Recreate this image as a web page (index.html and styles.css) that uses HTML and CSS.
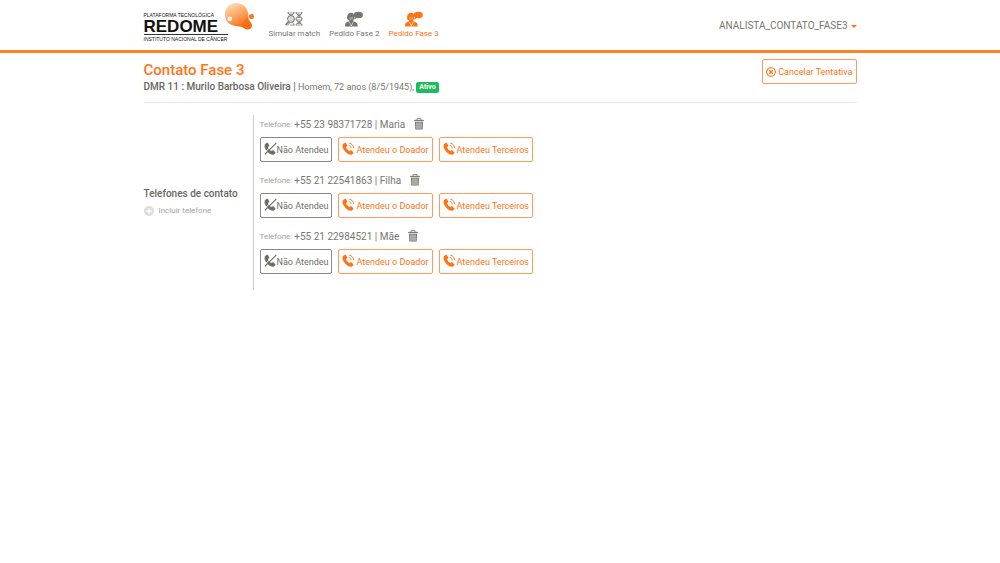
FILE: index.html
```html
<!DOCTYPE html>
<html lang="pt-BR">
<head>
<meta charset="utf-8">
<title>Redome - Contato Fase 3</title>
<meta name="viewport" content="width=device-width, initial-scale=1">
<link rel="stylesheet" href="styles.css">
</head>
<body>
<svg class="symbols" aria-hidden="true">
  <defs>
    <linearGradient id="drop" x1="0" y1="0" x2=".5" y2="1">
      <stop offset="0" stop-color="#ffe9d2"/><stop offset=".45" stop-color="#ffae70"/><stop offset="1" stop-color="#f96f12"/>
    </linearGradient>
  </defs>
  <symbol id="agent" viewBox="0 0 18 16">
    <ellipse cx="13.3" cy="4" rx="4.600" ry="3.300" fill="currentColor"/>
    <path d="M10 5.500 9.200 8.600l3-1.800z" fill="currentColor"/>
    <path d="M2.200 8.300C1.500 4 3.600 1.700 6 1.700c1.700 0 2.800.9 3 2.300l.2 3.500-1 2H4.300z" fill="currentColor"/>
    <path d="M4.200 6.200c1.500.2 2.700-.2 3.800-.8.300 2.300-.5 4-1.800 4S4.100 8.200 4.200 6.200z" fill="#fff" opacity=".25"/>
    <path d="M0 15.500c0-3.200.8-4.300 3.800-5l.8-1.500h3.400l.8 1.500c3 .7 3.900 1.800 3.900 5z" fill="currentColor"/>
    <path d="m4.200 10.600 2.100 4.400 2.100-4.400" fill="none" stroke="#fff" stroke-width=".6"/>
  </symbol>
  <symbol id="phone" viewBox="0 0 14 14">
    <path d="M1.200 2.200 3 .9c.5-.3 1-.2 1.300.3l1.300 2.300c.3.500.1 1-.3 1.300l-1 .7c.4 1.700 1.900 3.500 3.700 4.300l1-.7c.5-.3 1-.3 1.300.1l1.800 1.900c.4.500.3 1-.1 1.300l-1.500 1.200C5.500 14.700-1.500 6 1.200 2.200z" fill="currentColor"/>
  </symbol>
  <symbol id="call" viewBox="0 0 14 14">
    <use href="#phone" width="14" height="14"/>
    <path d="M7.300 3.700c1.500.3 2.500 1.500 2.500 3M7.800 1.200c2.700.4 4.500 2.600 4.500 5.200" fill="none" stroke="currentColor" stroke-width="1"/>
  </symbol>
  <symbol id="missed" viewBox="0 0 14 14">
    <use href="#phone" width="14" height="14"/>
    <path d="M0 12.100 12.400.2" stroke="#fff" stroke-width="1"/>
    <path d="M.8 13.300 13.200 1.200" stroke="currentColor" stroke-width="1.300"/>
  </symbol>
  <symbol id="trash" viewBox="0 0 10 12">
    <path d="M3 2V.6h4V2" fill="none" stroke="currentColor" stroke-width=".9"/>
    <path d="M.2 2.500h9.600" stroke="currentColor" stroke-width="1.300"/>
    <path d="M.9 3.700h8.200L8.700 11.600H1.300z" fill="currentColor"/>
    <path d="M3 4.500v6.300M5 4.500v6.300M7 4.500v6.300" stroke="#fff" stroke-width=".7"/>
  </symbol>
</svg>

<header class="topbar">
  <div class="container topbar-inner">
    <a class="brand" href="#">
      <span class="brand-text">
        <span class="brand-small">PLATAFORMA TECNOLÓGICA</span>
        <span class="brand-name">REDOME</span>
        <span class="brand-institute">INSTITUTO NACIONAL DE CÂNCER</span>
      </span>
      <svg class="brand-drop" viewBox="0 0 31 29" aria-hidden="true">
        <path d="M1 12C1 5 6 1 12 1c7 0 11 4.500 12 10 .7 4 .2 6.500 2.500 9 2 2.300 2.200 5-.2 6.800-2.300 1.500-4.600.7-6.500-.8-2.500-1.800-4.800-1.500-8.300-2C5 23.300 1 19 1 12z" fill="url(#drop)"/>
        <circle cx="27.500" cy="14.500" r="2.500" fill="#f9761c"/>
        <path d="M9 23.500c7 .5 11-3 14.500-9 .3 3 .8 4.500 2.700 6.500 2 2 1.800 4.500-.2 5.600-2 1-4 .3-6-1.100-2.500-1.700-6-1-11-2z" fill="#f7660a" opacity=".5"/>
        <circle cx="5.800" cy="16.800" r="2.400" fill="#fff" opacity=".9"/>
      </svg>
    </a>
    <nav class="menu">
      <a class="menu-item" href="#">
        <svg class="menu-icon" viewBox="0 0 18 16" fill="none" stroke="currentColor" aria-hidden="true">
          <path d="M3 1c0 4 6 4 6 7s-6 3-6 6.500M9 1c0 4-6 4-6 7M11 1c0 4 6 4 6 7s-6 3-6 6.500M17 1c0 4-6 4-6 7s6 3 6 6.500M9 14.500c0-1.200-.6-2-1.500-2.700" stroke-width="1"/>
          <path d="M3 2h6M4 3.600h4M11 2h6M12 3.600h4M11.500 6.500h5M11.500 9h5M12 12.500h4M11 14h6M5 14h4" stroke-width=".7"/>
          <circle cx="6" cy="8" r="3.200" fill="#fff" stroke-width="1.100"/>
          <path d="M4.500 7h3M4.500 9h3" stroke-width=".7"/>
          <path d="M3.700 10.500.6 14.200" stroke-width="1.600"/>
        </svg>
        <span>Simular match</span>
      </a>
      <a class="menu-item" href="#"><svg class="menu-icon" aria-hidden="true"><use href="#agent"/></svg><span>Pedido Fase 2</span></a>
      <a class="menu-item active" href="#" aria-current="page"><svg class="menu-icon" aria-hidden="true"><use href="#agent"/></svg><span>Pedido Fase 3</span></a>
    </nav>
    <button class="user" type="button">ANALISTA_CONTATO_FASE3<span class="caret"></span></button>
  </div>
</header>

<main class="container">
  <section class="heading">
    <div>
      <h1 class="title">Contato Fase 3</h1>
      <p class="donor"><strong class="donor-name">DMR 11 : Murilo Barbosa Oliveira |</strong> Homem, 72 anos (8/5/1945), <span class="badge">Ativo</span></p>
    </div>
    <button class="btn btn-cancel" type="button">
      <svg class="cancel-icon" viewBox="0 0 10 10" fill="none" stroke="currentColor" aria-hidden="true"><circle cx="5" cy="5" r="4.300" stroke-width="1.100"/><path d="m3.300 3.300 3.400 3.400m0-3.400L3.300 6.700" stroke-width="1.400"/></svg>
      Cancelar Tentativa
    </button>
  </section>

  <section class="contacts">
    <div class="side">
      <h2 class="side-title">Telefones de contato</h2>
      <button class="add" type="button">
        <svg class="add-icon" viewBox="0 0 10 10" aria-hidden="true"><circle cx="5" cy="5" r="5" fill="currentColor"/><path d="M5 2.200v5.600M2.200 5h5.600" stroke="#fff" stroke-width="1.500"/></svg>
        Incluir telefone
      </button>
    </div>
    <ul class="phones">
      <li class="phone">
        <div class="phone-line"><span class="phone-label">Telefone:</span><span>+55 23 98371728 | Maria</span><button class="trash" type="button" aria-label="Excluir telefone"><svg class="trash-icon"><use href="#trash"/></svg></button></div>
        <div class="actions">
          <button class="btn btn-gray" type="button"><svg class="call-icon"><use href="#missed"/></svg>Não Atendeu</button>
          <button class="btn btn-call" type="button"><svg class="call-icon"><use href="#call"/></svg>Atendeu o Doador</button>
          <button class="btn btn-call" type="button"><svg class="call-icon"><use href="#call"/></svg>Atendeu Terceiros</button>
        </div>
      </li>
      <li class="phone">
        <div class="phone-line"><span class="phone-label">Telefone:</span><span>+55 21 22541863 | Filha</span><button class="trash" type="button" aria-label="Excluir telefone"><svg class="trash-icon"><use href="#trash"/></svg></button></div>
        <div class="actions">
          <button class="btn btn-gray" type="button"><svg class="call-icon"><use href="#missed"/></svg>Não Atendeu</button>
          <button class="btn btn-call" type="button"><svg class="call-icon"><use href="#call"/></svg>Atendeu o Doador</button>
          <button class="btn btn-call" type="button"><svg class="call-icon"><use href="#call"/></svg>Atendeu Terceiros</button>
        </div>
      </li>
      <li class="phone">
        <div class="phone-line"><span class="phone-label">Telefone:</span><span>+55 21 22984521 | Mãe</span><button class="trash" type="button" aria-label="Excluir telefone"><svg class="trash-icon"><use href="#trash"/></svg></button></div>
        <div class="actions">
          <button class="btn btn-gray" type="button"><svg class="call-icon"><use href="#missed"/></svg>Não Atendeu</button>
          <button class="btn btn-call" type="button"><svg class="call-icon"><use href="#call"/></svg>Atendeu o Doador</button>
          <button class="btn btn-call" type="button"><svg class="call-icon"><use href="#call"/></svg>Atendeu Terceiros</button>
        </div>
      </li>
    </ul>
  </section>
</main>
</body>
</html>
```
FILE: styles.css
```css
* { box-sizing: border-box; }

body {
  margin: 0;
  background: #fff;
  color: #77766e;
  font: 10px/16px Roboto, sans-serif;
}

button {
  margin: 0;
  padding: 0;
  border: 0;
  background: none;
  color: inherit;
  font: inherit;
  cursor: pointer;
}

a { color: inherit; text-decoration: none; }

.symbols { position: absolute; width: 0; height: 0; }

.container {
  max-width: 713px;
  margin: 0 auto;
}

.topbar { border-bottom: 3px solid #ff8126; }

.topbar-inner {
  display: flex;
  align-items: flex-start;
  min-height: 50px;
}

.brand {
  display: flex;
  align-items: flex-start;
  padding-top: 2px;
  color: #111;
  font-family: "Liberation Sans", Arial, sans-serif;
}

.brand-text {
  display: flex;
  flex-direction: column;
  width: 84px;
  padding-top: 10px;
  white-space: nowrap;
}

.brand-small { font-size: 5px; line-height: 7px; }
.brand-name { font-size: 17px; line-height: 15px; font-weight: 700; }
.brand-institute { border-top: 1px solid #333; font-size: 5px; line-height: 8px; }

.brand-drop { width: 31px; height: 29px; margin-left: -4px; }

.menu {
  display: flex;
  gap: 9px;
  padding: 11px 0 0 14px;
}

.menu-item {
  display: flex;
  flex-direction: column;
  align-items: center;
  font-size: 8px;
  line-height: 14px;
}

.menu-icon { width: 18px; height: 16px; }
.menu-item.active { color: #ff7415; }

.user {
  display: flex;
  align-items: center;
  gap: 3px;
  margin-left: auto;
  padding-top: 18px;
  font-size: 10px;
}

.caret {
  border: 3px solid transparent;
  border-top-color: #ff7415;
  border-bottom: 0;
}

.heading {
  display: flex;
  justify-content: space-between;
  align-items: flex-start;
  padding: 6px 0 7px;
  border-bottom: 1px solid #e6e6e6;
}

.title {
  margin: 2px 0 0;
  color: #ff7415;
  font-size: 15px;
  line-height: 18px;
  font-weight: 500;
}

.donor { margin: 0; font-size: 9px; line-height: 15px; }
.donor-name { color: #67665e; font-size: 10px; font-weight: 500; }

.badge {
  display: inline-block;
  padding: 0 3px;
  border-radius: 2px;
  background: #1fbb5c;
  color: #fff;
  font-size: 7px;
  line-height: 11px;
  font-weight: 700;
  vertical-align: middle;
}

.btn {
  display: flex;
  align-items: center;
  height: 25px;
  padding: 0 3px;
  border: 1px solid #ff9a5a;
  border-radius: 2px;
  color: #ff7415;
  font-size: 9px;
  white-space: nowrap;
}

.btn-gray { border-color: #8a8a84; color: #706f66; }
.btn-cancel { gap: 2px; }
.btn-call { gap: 1px; }

.cancel-icon { width: 10px; height: 10px; }
.call-icon { width: 13px; height: 13px; margin-bottom: 2px; }

.contacts { display: flex; padding-top: 12px; }

.side {
  display: flex;
  flex-direction: column;
  justify-content: center;
  align-items: flex-start;
  width: 110px;
  padding-bottom: 2px;
  border-right: 1px solid #ccc;
}

.side-title { margin: 0; color: #67665e; font-size: 10px; line-height: 18px; font-weight: 500; }

.add {
  display: flex;
  align-items: center;
  gap: 5px;
  color: #a3a19a;
  font-size: 8px;
}

.add-icon { width: 10px; height: 10px; color: #dddcd8; }

.phones { margin: 0; padding: 0 0 16px 6px; list-style: none; }
.phone + .phone { margin-top: 9px; }

.phone-line {
  display: flex;
  align-items: center;
  height: 19px;
  margin-bottom: 3px;
  font-size: 10px;
}

.phone-label { margin-right: 2px; color: #a3a19a; font-size: 8px; }
.trash { display: flex; margin: 0 0 2px 9px; }
.trash-icon { width: 10px; height: 12px; color: #7d7c75; }
.actions { display: flex; gap: 6px; }
```
